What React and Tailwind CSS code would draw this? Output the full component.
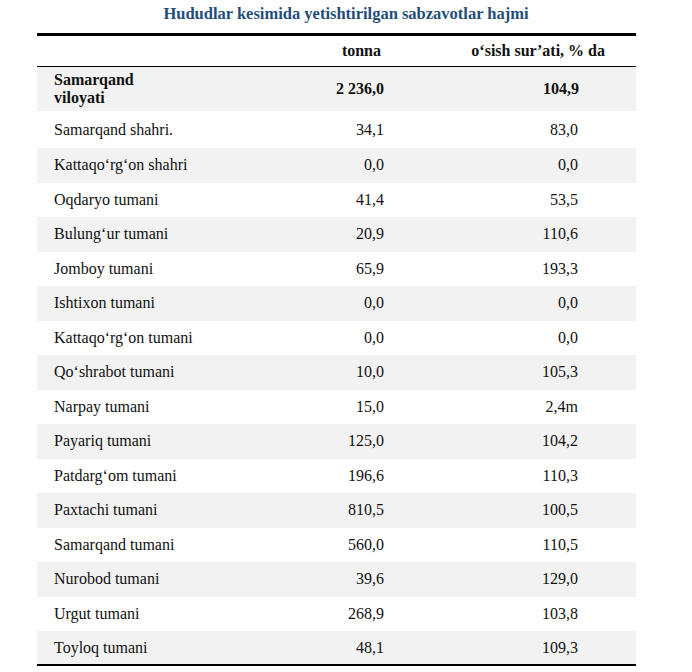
import React from 'react';

const rows = [
  ['Samarqand shahri.', '34,1', '83,0'],
  ['Kattaqo‘rg‘on shahri', '0,0', '0,0'],
  ['Oqdaryo tumani', '41,4', '53,5'],
  ['Bulung‘ur tumani', '20,9', '110,6'],
  ['Jomboy tumani', '65,9', '193,3'],
  ['Ishtixon tumani', '0,0', '0,0'],
  ['Kattaqo‘rg‘on tumani', '0,0', '0,0'],
  ['Qo‘shrabot tumani', '10,0', '105,3'],
  ['Narpay tumani', '15,0', '2,4m'],
  ['Payariq tumani', '125,0', '104,2'],
  ['Patdarg‘om tumani', '196,6', '110,3'],
  ['Paxtachi tumani', '810,5', '100,5'],
  ['Samarqand tumani', '560,0', '110,5'],
  ['Nurobod tumani', '39,6', '129,0'],
  ['Urgut tumani', '268,9', '103,8'],
  ['Toyloq tumani', '48,1', '109,3'],
];

export default function App() {
  return (
    <div className="w-[692px] h-[672px] bg-white overflow-hidden font-[family-name:Liberation_Serif,serif] text-[#111]">
      {/* Title */}
      <h1 className="h-[33px] pt-[2px] text-center text-[16.5px] font-bold text-[#1f4e79]">
        Hududlar kesimida yetishtirilgan sabzavotlar hajmi
      </h1>

      <div className="ml-[37px] w-[599px] border-t-[3px] border-black">
        {/* Header */}
        <div className="flex h-[31px] items-center border-b border-black text-[16px] font-bold">
          <div className="w-[247px]" />
          <div className="w-[100px] pr-[3px] text-right">tonna</div>
          <div className="flex-1 pr-[31px] text-right">o‘sish sur’ati, % da</div>
        </div>

        {/* Viloyat */}
        <div className="flex h-[44px] items-center bg-[#f2f2f2] text-[16px] font-bold leading-[18px]">
          <div className="w-[247px] pl-[17px]">
            Samarqand
            <br />
            viloyati
          </div>
          <div className="w-[100px] text-right">2 236,0</div>
          <div className="flex-1 pr-[57px] text-right">104,9</div>
        </div>

        {rows.map((r, i) => (
          <div
            key={i}
            className={
              'flex items-center text-[16px] ' +
              (i === 0 ? 'h-[37px] ' : i === rows.length - 1 ? 'h-[33px] ' : 'h-[34.5px] ') +
              (i % 2 === 1 ? 'bg-[#f2f2f2]' : 'bg-white')
            }
          >
            <div className="w-[247px] pl-[17px]">{r[0]}</div>
            <div className="w-[100px] text-right">{r[1]}</div>
            <div className="flex-1 pr-[58px] text-right">{r[2]}</div>
          </div>
        ))}

        <div className="border-t-2 border-black" />
      </div>
    </div>
  );
}
